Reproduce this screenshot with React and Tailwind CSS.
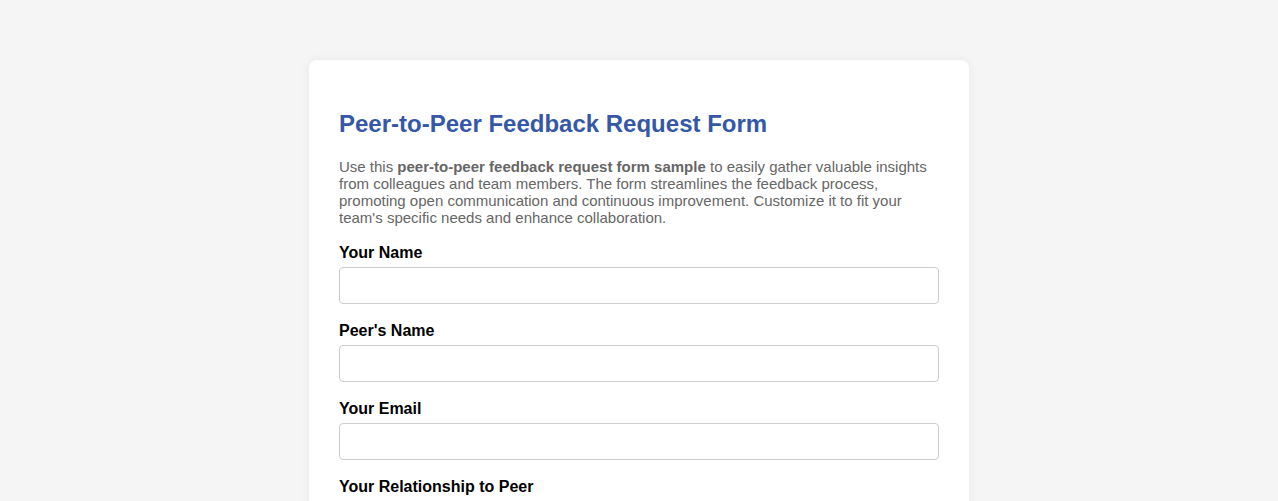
import React from "react";

function Field({ label, children }) {
  return (
    <div className="flex flex-col">
      <label className="mb-[5px] text-[16px] leading-[18px] font-bold text-black">{label}</label>
      {children}
    </div>
  );
}

const inputCls =
  "block w-full h-[37px] rounded-[4px] border border-[#cccccc] bg-white px-[10px] text-[16px] outline-none";

export default function App() {
  return (
    <div
      className="min-h-screen bg-[#f5f5f5] pt-[60px] pb-[60px]"
      style={{ fontFamily: '"Liberation Sans", Arial, sans-serif' }}
    >
      <div className="mx-auto w-[660px] rounded-[8px] bg-white px-[30px] pt-[30px] pb-[30px] shadow-[0_0_10px_rgba(0,0,0,0.06)]">
        <h1 className="mt-5 text-[24px] leading-[27.6px] font-bold text-[#3557a7]">
          Peer-to-Peer Feedback Request Form
        </h1>
        <p className="mt-5 text-[15px] leading-[17px] text-[#666666]">
          Use this <strong className="font-bold">peer-to-peer feedback request form sample</strong> to easily gather
          valuable insights from colleagues and team members. The form streamlines the feedback process, promoting open
          communication and continuous improvement. Customize it to fit your team's specific needs and enhance
          collaboration.
        </p>
        <form className="mt-[18px] flex flex-col gap-[18px]">
          <Field label="Your Name">
            <input type="text" className={inputCls} />
          </Field>
          <Field label="Peer's Name">
            <input type="text" className={inputCls} />
          </Field>
          <Field label="Your Email">
            <input type="email" className={inputCls} />
          </Field>
          <Field label="Your Relationship to Peer">
            <select className={inputCls}>
              <option>Select relationship</option>
              <option>Colleague</option>
              <option>Manager</option>
              <option>Direct Report</option>
            </select>
          </Field>
          <Field label="Areas for Feedback">
            <textarea className="block w-full h-[100px] rounded-[4px] border border-[#cccccc] p-[10px]" />
          </Field>
          <button
            type="button"
            className="h-[40px] rounded-[4px] bg-[#3557a7] text-[16px] font-bold text-white"
          >
            Submit Request
          </button>
        </form>
      </div>
    </div>
  );
}
